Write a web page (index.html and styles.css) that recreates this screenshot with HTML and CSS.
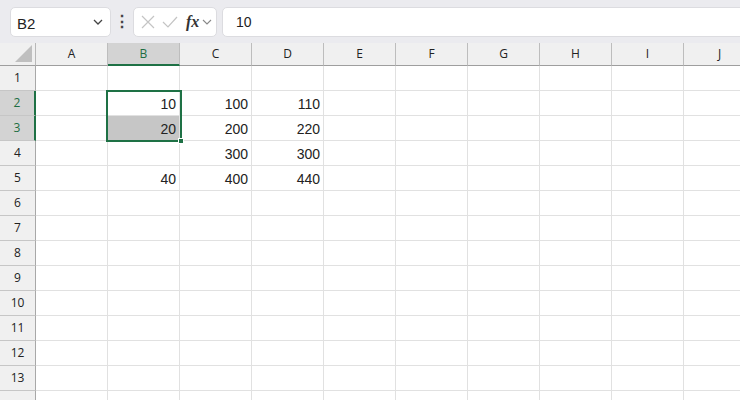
FILE: index.html
```html
<!DOCTYPE html>
<html lang="ja">

<head>
    <meta charset="UTF-8">
    <meta name="viewport" content="width=device-width, initial-scale=1.0">
    <title>Book1 - Excel</title>
    <link rel="stylesheet" href="styles.css">
</head>

<body>
    <div class="formula-bar">
        <div class="name-box">
            <span>B2</span>
            <svg class="chev" width="10" height="6" viewBox="0 0 10 6"><path d="M1 1 L5 5 L9 1" fill="none" stroke="#444" stroke-width="1.3"/></svg>
        </div>
        <div class="grip">&#8942;</div>
        <div class="fx-buttons">
            <svg width="14" height="14" viewBox="0 0 14 14"><path d="M1 1 L13 13 M13 1 L1 13" stroke="#c4c4c4" stroke-width="1.2"/></svg>
            <svg width="16" height="14" viewBox="0 0 16 14"><path d="M1 7 L6 12 L15 2" fill="none" stroke="#c4c4c4" stroke-width="1.2"/></svg>
            <span class="fx">fx</span>
            <svg width="10" height="6" viewBox="0 0 10 6"><path d="M1 1 L5 5 L9 1" fill="none" stroke="#888" stroke-width="1.1"/></svg>
        </div>
        <div class="formula-input">10</div>
    </div>

    <div class="sheet">
        <div class="corner"><span class="tri"></span></div>
        <div class="col-head">A</div>
        <div class="col-head active">B</div>
        <div class="col-head">C</div>
        <div class="col-head">D</div>
        <div class="col-head">E</div>
        <div class="col-head">F</div>
        <div class="col-head">G</div>
        <div class="col-head">H</div>
        <div class="col-head">I</div>
        <div class="col-head">J</div>

        <div class="row-head">1</div>
        <div class="cell"></div><div class="cell"></div><div class="cell"></div><div class="cell"></div><div class="cell"></div>
        <div class="cell"></div><div class="cell"></div><div class="cell"></div><div class="cell"></div><div class="cell"></div>

        <div class="row-head active">2</div>
        <div class="cell"></div><div class="cell">10</div><div class="cell">100</div><div class="cell">110</div><div class="cell"></div>
        <div class="cell"></div><div class="cell"></div><div class="cell"></div><div class="cell"></div><div class="cell"></div>

        <div class="row-head active">3</div>
        <div class="cell"></div><div class="cell picked">20</div><div class="cell">200</div><div class="cell">220</div><div class="cell"></div>
        <div class="cell"></div><div class="cell"></div><div class="cell"></div><div class="cell"></div><div class="cell"></div>

        <div class="row-head">4</div>
        <div class="cell"></div><div class="cell"></div><div class="cell">300</div><div class="cell">300</div><div class="cell"></div>
        <div class="cell"></div><div class="cell"></div><div class="cell"></div><div class="cell"></div><div class="cell"></div>

        <div class="row-head">5</div>
        <div class="cell"></div><div class="cell">40</div><div class="cell">400</div><div class="cell">440</div><div class="cell"></div>
        <div class="cell"></div><div class="cell"></div><div class="cell"></div><div class="cell"></div><div class="cell"></div>

        <div class="row-head">6</div>
        <div class="cell"></div><div class="cell"></div><div class="cell"></div><div class="cell"></div><div class="cell"></div>
        <div class="cell"></div><div class="cell"></div><div class="cell"></div><div class="cell"></div><div class="cell"></div>

        <div class="row-head">7</div>
        <div class="cell"></div><div class="cell"></div><div class="cell"></div><div class="cell"></div><div class="cell"></div>
        <div class="cell"></div><div class="cell"></div><div class="cell"></div><div class="cell"></div><div class="cell"></div>

        <div class="row-head">8</div>
        <div class="cell"></div><div class="cell"></div><div class="cell"></div><div class="cell"></div><div class="cell"></div>
        <div class="cell"></div><div class="cell"></div><div class="cell"></div><div class="cell"></div><div class="cell"></div>

        <div class="row-head">9</div>
        <div class="cell"></div><div class="cell"></div><div class="cell"></div><div class="cell"></div><div class="cell"></div>
        <div class="cell"></div><div class="cell"></div><div class="cell"></div><div class="cell"></div><div class="cell"></div>

        <div class="row-head">10</div>
        <div class="cell"></div><div class="cell"></div><div class="cell"></div><div class="cell"></div><div class="cell"></div>
        <div class="cell"></div><div class="cell"></div><div class="cell"></div><div class="cell"></div><div class="cell"></div>

        <div class="row-head">11</div>
        <div class="cell"></div><div class="cell"></div><div class="cell"></div><div class="cell"></div><div class="cell"></div>
        <div class="cell"></div><div class="cell"></div><div class="cell"></div><div class="cell"></div><div class="cell"></div>

        <div class="row-head">12</div>
        <div class="cell"></div><div class="cell"></div><div class="cell"></div><div class="cell"></div><div class="cell"></div>
        <div class="cell"></div><div class="cell"></div><div class="cell"></div><div class="cell"></div><div class="cell"></div>

        <div class="row-head">13</div>
        <div class="cell"></div><div class="cell"></div><div class="cell"></div><div class="cell"></div><div class="cell"></div>
        <div class="cell"></div><div class="cell"></div><div class="cell"></div><div class="cell"></div><div class="cell"></div>

        <!-- row 14 is cut off by the window, its number isn't visible -->
        <div class="row-head"></div>
        <div class="cell"></div><div class="cell"></div><div class="cell"></div><div class="cell"></div><div class="cell"></div>
        <div class="cell"></div><div class="cell"></div><div class="cell"></div><div class="cell"></div><div class="cell"></div>

        <!-- selection B2:B3 -->
        <div class="selection"></div>
        <div class="fill-handle"></div>
    </div>
</body>

</html>
```

FILE: styles.css
```css
/* Spreadsheet view */
body {
    margin: 0;
    width: 740px;
    height: 400px;
    overflow: hidden;
    background: #ffffff;
    font-family: "Liberation Sans", Arial, sans-serif;
    color: #222222;
}

.formula-bar {
    height: 43px;
    background: #ebebef;
    display: flex;
    align-items: center;
    padding-left: 10px;
    box-sizing: border-box;
}

.name-box {
    width: 101px;
    height: 30px;
    box-sizing: border-box;
    background: #ffffff;
    border: 1px solid #dcdce0;
    border-radius: 5px;
    display: flex;
    align-items: center;
    justify-content: space-between;
    padding: 0 7px 0 6px;
    font-size: 15px;
    color: #222222;
}

.name-box span {
    padding-top: 3px;
}

.grip {
    width: 22px;
    text-align: center;
    font-size: 16px;
    font-weight: bold;
    color: #444444;
}

.fx-buttons {
    width: 84px;
    height: 30px;
    box-sizing: border-box;
    background: #ffffff;
    border: 1px solid #dcdce0;
    border-radius: 5px;
    display: flex;
    align-items: center;
    gap: 7px;
    padding-left: 7px;
}

.fx {
    font-family: "Liberation Serif", "Times New Roman", serif;
    font-style: italic;
    font-weight: bold;
    font-size: 16px;
    color: #333333;
    margin-left: 1px;
    margin-right: -4px;
}

.formula-input {
    flex: 1;
    height: 30px;
    box-sizing: border-box;
    margin-left: 5px;
    margin-right: -8px;
    background: #ffffff;
    border: 1px solid #dcdce0;
    border-radius: 5px;
    display: flex;
    align-items: center;
    padding-left: 13px;
    font-size: 14px;
    color: #222222;
}

.sheet {
    position: relative;
    display: grid;
    grid-template-columns: 36px repeat(10, 72px);
    grid-template-rows: 23px;
    grid-auto-rows: 25px;
}

.sheet > div {
    box-sizing: border-box;
}

.corner {
    background: #f0f0f0;
    border-right: 1px solid #b8b8b8;
    border-bottom: 1px solid #9e9e9e;
    position: relative;
}

.tri {
    position: absolute;
    right: 3px;
    bottom: 3px;
    width: 0;
    height: 0;
    border-left: 17px solid transparent;
    border-bottom: 17px solid #bfbfbf;
}

.col-head {
    background: #f0f0f0;
    border-right: 1px solid #bdbdbd;
    border-bottom: 1px solid #9e9e9e;
    text-align: center;
    font-family: "Open Sans", "Noto Sans", sans-serif;
    font-size: 12px;
    line-height: 22px;
    color: #222222;
}

.col-head.active {
    background: #d3d3d3;
    color: #1e6e42;
    border-bottom: 2px solid #1e7145;
}

.row-head {
    background: #f0f0f0;
    border-right: 1px solid #a8a8a8;
    border-bottom: 1px solid #c6c6c6;
    text-align: center;
    font-family: "Open Sans", "Noto Sans", sans-serif;
    font-size: 12px;
    line-height: 24px;
    color: #222222;
}

.row-head.active {
    background: #d3d3d3;
    color: #1e6e42;
    border-right: 2px solid #1e7145;
}

.cell {
    border-right: 1px solid #e1e1e1;
    border-bottom: 1px solid #e1e1e1;
    text-align: right;
    padding-right: 3px;
    font-size: 14px;
    line-height: 26px;
    color: #222222;
}

.cell.picked {
    background: #c6c6c6;
}

.selection {
    position: absolute;
    left: 106px;
    top: 47px;
    width: 76px;
    height: 52px;
    border: 2px solid #1e7145;
    pointer-events: none;
}

.fill-handle {
    position: absolute;
    left: 178px;
    top: 95px;
    width: 6px;
    height: 6px;
    background: #1e7145;
    border: 1px solid #ffffff;
}
```
